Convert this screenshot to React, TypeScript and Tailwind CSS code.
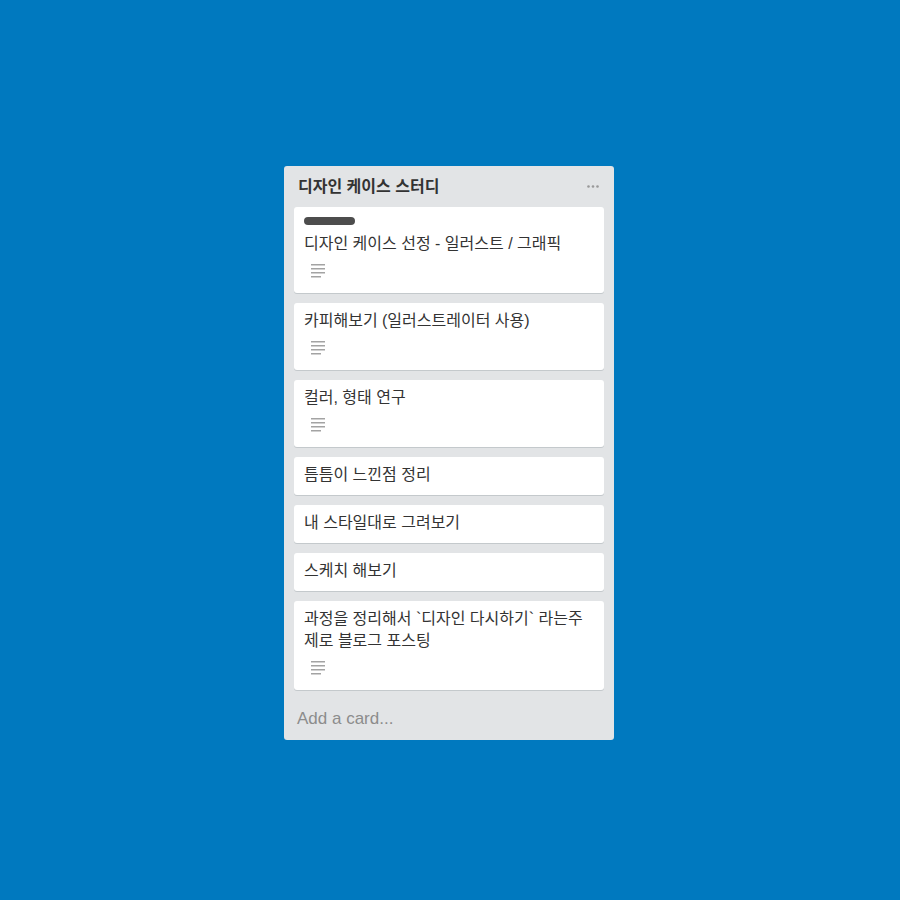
import React from "react";

const DescIcon = () => (
  <svg width="14" height="14" viewBox="0 0 14 14" className="block">
    <rect x="0" y="0" width="14" height="1.5" fill="#a3a3a3" />
    <rect x="0" y="4" width="14" height="1.5" fill="#a3a3a3" />
    <rect x="0" y="8" width="14" height="1.5" fill="#a3a3a3" />
    <rect x="0" y="12" width="10" height="1.5" fill="#a3a3a3" />
  </svg>
);

type Card = { text: string; label?: boolean; desc?: boolean };

const cards: Card[] = [
  { text: "디자인 케이스 선정 - 일러스트 / 그래픽", label: true, desc: true },
  { text: "카피해보기 (일러스트레이터 사용)", desc: true },
  { text: "컬러, 형태 연구", desc: true },
  { text: "틈틈이 느낀점 정리" },
  { text: "내 스타일대로 그려보기" },
  { text: "스케치 해보기" },
  { text: "과정을 정리해서 `디자인 다시하기` 라는주제로 블로그 포스팅", desc: true },
];

export default function App() {
  return (
    <div
      className="min-h-[900px] w-full bg-[#0079bf] pt-[166px] pl-[284px]"
      style={{ fontFamily: '"Liberation Sans", "Noto Sans CJK KR", sans-serif' }}
    >
      <div className="w-[330px] rounded-[3px] bg-[#e2e4e6]">
        <div className="flex h-[41px] items-center justify-between pl-[14px] pr-[15px]">
          <div className="text-[16px] font-bold text-[#333]">디자인 케이스 스터디</div>
          <svg width="12" height="3" viewBox="0 0 12 3">
            <circle cx="1.5" cy="1.5" r="1.3" fill="#999" />
            <circle cx="6" cy="1.5" r="1.3" fill="#999" />
            <circle cx="10.5" cy="1.5" r="1.3" fill="#999" />
          </svg>
        </div>
        <div className="flex flex-col gap-[10px] px-[10px]">
          {cards.map((c, i) => (
            <div
              key={i}
              className={`rounded-[3px] bg-white px-[10px] pt-[7px] shadow-[0_1px_0_#c4c9cc] ${c.desc ? "pb-[8px]" : "pb-[9px]"}`}
            >
              {c.label && <div className="mt-[3px] mb-[8px] h-[8px] w-[51px] rounded-[4px] bg-[#4d4d4d]" />}
              <div className="text-[16px] leading-[22px] text-[#333]">{c.text}</div>
              {c.desc && (
                <div className="mt-[9px] mb-[7px] pl-[7px]">
                  <DescIcon />
                </div>
              )}
            </div>
          ))}
        </div>
        <div className="flex h-[50px] items-center pl-[13px] pt-[8px] text-[17px] text-[#8c8c8c]">
          Add a card...
        </div>
      </div>
    </div>
  );
}
